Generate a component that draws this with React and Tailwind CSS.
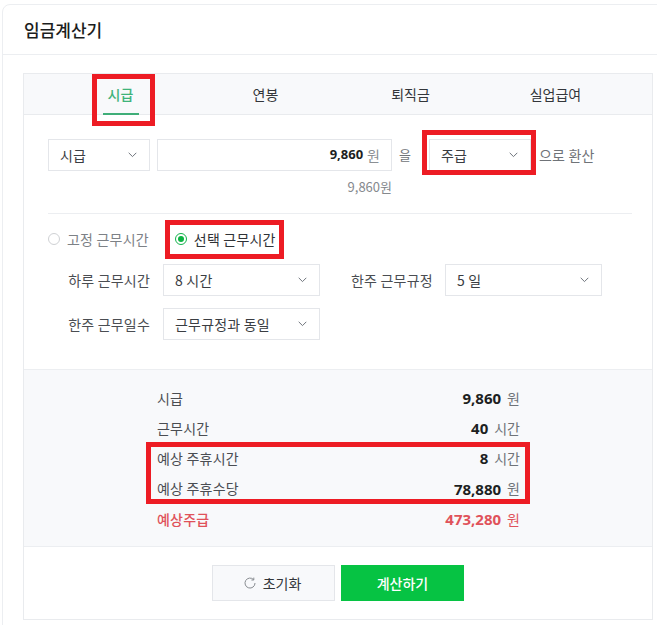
import React from "react";

function Chevron({ className = "" }) {
  return (
    <svg width="9" height="6" viewBox="0 0 9 6" fill="none" className={className}>
      <path d="M0.7 0.8l3.8 3.8 3.8-3.8" stroke="#6f747c" strokeWidth="1" />
    </svg>
  );
}

function Select({ label, className = "", pad = "pl-[11px] pr-3" }) {
  return (
    <div className={`h-8 border border-[#e4e6ea] bg-white flex items-center justify-between ${pad} ${className}`}>
      <span className="text-[14px] tracking-[0.2px] text-[#3a3d42]">{label}</span>
      <Chevron />
    </div>
  );
}

function Radio({ on, label, textClass }) {
  return (
    <div className="flex items-center gap-[7px]">
      <span className={`w-3 h-3 rounded-full border flex items-center justify-center bg-white ${on ? "border-[#12b34b]" : "border-[#cfd1d4]"}`}>
        {on && <span className="w-1.5 h-1.5 rounded-full bg-[#0cb342]" />}
      </span>
      <span className={`text-[14px] tracking-[0.2px] ${textClass}`}>{label}</span>
    </div>
  );
}

function Row({ label, value, unit, red }) {
  return (
    <div className="h-[30.25px] flex items-center justify-between">
      <span className={`text-[14px] tracking-[0.2px] ${red ? "text-[#e0525a] font-medium" : "text-[#4a4d52]"}`}>{label}</span>
      <span className="flex items-center gap-1.5">
        <span className={`text-[15px] font-bold font-['Open_Sans'] ${red ? "text-[#e0525a]" : "text-[#1d1f22]"}`}>{value}</span>
        <span className={`text-[14px] ${red ? "text-[#e0525a]" : "text-[#6f7378]"}`}>{unit}</span>
      </span>
    </div>
  );
}

export default function App() {
  return (
    <div className="relative w-[657px] h-[625px] overflow-hidden bg-white pt-1 pl-0.5 font-['Noto_Sans_CJK_KR','Noto_Sans',sans-serif]">
      <div className="w-[700px] h-[700px] border border-[#eceef1] rounded-lg bg-white">
        <div className="h-[50px] border-b border-[#eceef1] flex items-center pl-[21px]">
          <h1 className="text-[17px] font-medium text-[#1b1d20]">임금계산기</h1>
        </div>
        <div className="pl-5 pt-[18px]">
          <div className="w-[630px] h-[547px] border border-[#e9ebee] flex flex-col">
            <div className="h-[41px] shrink-0 bg-[#f8f9fb] border-b border-[#e9ebee] px-6 grid grid-cols-4">
              <div className="relative flex items-center justify-center text-[14px] font-medium text-[#3fb37a]">
                시급
                <span className="absolute left-[55px] w-9 bottom-[-1px] h-0.5 bg-[#3fae78]" />
              </div>
              <div className="flex items-center justify-center text-[14px] text-[#33363a]">연봉</div>
              <div className="flex items-center justify-center text-[14px] text-[#33363a]">퇴직금</div>
              <div className="flex items-center justify-center text-[14px] text-[#33363a]">실업급여</div>
            </div>

            <div className="h-[254px] shrink-0 px-6 pt-6">
              <div className="flex items-center">
                <Select label="시급" className="w-[102px]" />
                <div className="ml-[7px] w-[235px] h-8 border border-[#e4e6ea] flex items-center justify-end pr-[11px] gap-1">
                  <span className="text-[13px] font-bold font-['Open_Sans'] text-[#1d1f22]">9,860</span>
                  <span className="text-[14px] text-[#8b8f94]">원</span>
                </div>
                <span className="ml-[7px] text-[13px] text-[#6f7378]">을</span>
                <Select label="주급" className="ml-[18px] w-[102px]" />
                <span className="ml-2 text-[14px] tracking-[0.2px] text-[#6f7378]">으로 환산</span>
              </div>
              <div className="w-[344px] text-right text-[13px] text-[#85898e] mt-[6px] h-[20px] leading-[20px]">9,860원</div>
              <div className="w-[584px] border-t border-[#eceef1] mt-[16px]" />
              <div className="flex items-center mt-[15px] h-[20px]">
                <Radio label="고정 근무시간" textClass="text-[#7d8186]" />
                <div className="ml-[26px]">
                  <Radio on label="선택 근무시간" textClass="text-[#2f3236]" />
                </div>
              </div>
              <div className="flex items-center mt-[15px]">
                <span className="w-[115px] text-right text-[14px] tracking-[0.2px] text-[#4a4d52] pr-[13px]">하루 근무시간</span>
                <Select label="8 시간" className="w-[157px]" />
                <span className="ml-[31px] w-[94px] text-[14px] tracking-[0.2px] text-[#4a4d52]">한주 근무규정</span>
                <Select label="5 일" className="w-[157px]" />
              </div>
              <div className="flex items-center mt-3">
                <span className="w-[115px] text-right text-[14px] tracking-[0.2px] text-[#4a4d52] pr-[13px]">한주 근무일수</span>
                <Select label="근무규정과 동일" className="w-[157px]" />
              </div>
            </div>

            <div className="h-[178px] shrink-0 bg-[#f8f9fb] border-y border-[#eceef1] pt-[13px] pl-[133px] pr-[132px]">
              <Row label="시급" value="9,860" unit="원" />
              <Row label="근무시간" value="40" unit="시간" />
              <Row label="예상 주휴시간" value="8" unit="시간" />
              <Row label="예상 주휴수당" value="78,880" unit="원" />
              <Row label="예상주급" value="473,280" unit="원" red />
            </div>

            <div className="flex justify-center pt-[18px] gap-1.5">
              <button className="w-[123px] h-9 border border-[#e4e6ea] bg-[#f8f9fb] flex items-center justify-center gap-[7px] pr-[2px] text-[14px] text-[#33363a]">
                <svg width="12" height="12" viewBox="0 0 12 12" fill="none">
                  <path d="M9.6 2.6A5 5 0 1 0 11 6" stroke="#888c91" strokeWidth="1" />
                  <path d="M9.8 0.6v2.4H7.4" stroke="#888c91" strokeWidth="1" />
                </svg>
                초기화
              </button>
              <button className="w-[123px] h-9 bg-[#06c343] text-white text-[14px] font-medium">계산하기</button>
            </div>
          </div>
        </div>
      </div>

      <div className="absolute left-[92px] top-[74px] w-[63px] h-[52px] border-[5px] border-[#ed1c24]" />
      <div className="absolute left-[422px] top-[130px] w-[114px] h-[45px] border-[5px] border-[#ed1c24]" />
      <div className="absolute left-[165px] top-[220px] w-[119px] h-[39px] border-[5px] border-[#ed1c24]" />
      <div className="absolute left-[146px] top-[442px] w-[384px] h-[62px] border-[5px] border-[#ed1c24]" />
    </div>
  );
}
